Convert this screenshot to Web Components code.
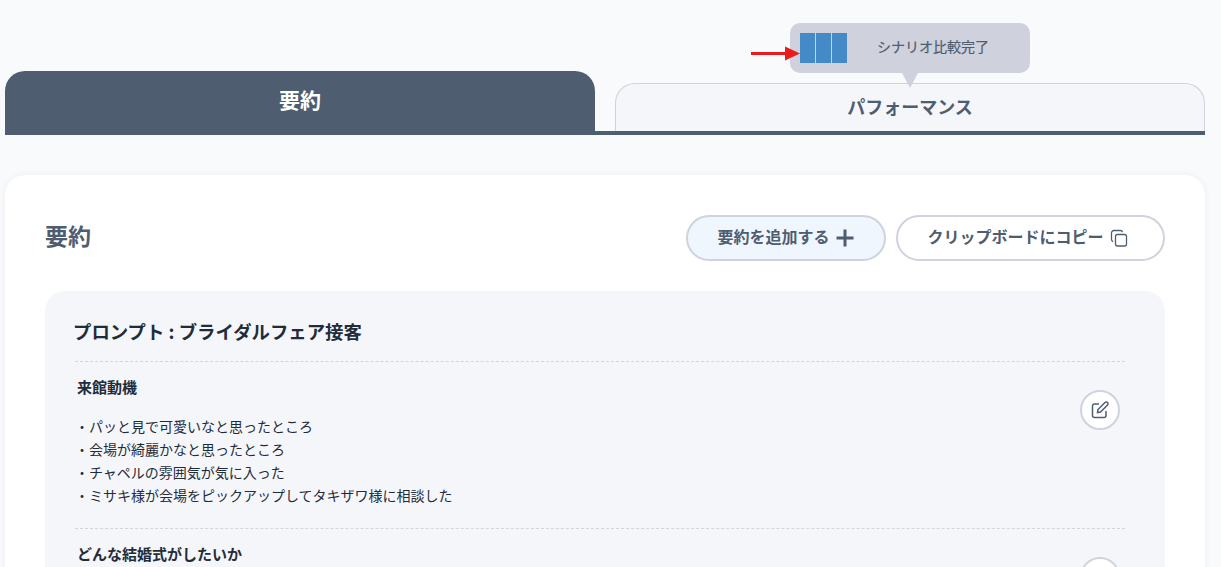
<!DOCTYPE html>
<html lang="ja">
<head>
<meta charset="utf-8">
<title>要約</title>
<style>
  html, body { margin: 0; height: 567px; overflow: hidden; background: #f9fafc; }
  body { font-family: "Noto Sans CJK JP", "Noto Sans", sans-serif; color: #1f2d3a; }
</style>
</head>
<body>
<app-page>
  <tab-bar></tab-bar>
  <summary-card>
    <prompt-panel heading="プロンプト : ブライダルフェア接客">
      <summary-row heading="来館動機">
        <p>・パッと見で可愛いなと思ったところ</p>
        <p>・会場が綺麗かなと思ったところ</p>
        <p>・チャペルの雰囲気が気に入った</p>
        <p>・ミサキ様が会場をピックアップしてタキザワ様に相談した</p>
      </summary-row>
      <summary-row heading="どんな結婚式がしたいか"></summary-row>
    </prompt-panel>
  </summary-card>
</app-page>

<script>
class AppPage extends HTMLElement {
  connectedCallback() {
    this.attachShadow({ mode: 'open' });
    this.shadowRoot.innerHTML = `
      <style>
        :host { display: flex; flex-direction: column; gap: 40px; padding: 0 16px 0 5px; }
      </style>
      <slot></slot>
    `;
  }
}
customElements.define('app-page', AppPage);

class TabBar extends HTMLElement {
  connectedCallback() {
    this.attachShadow({ mode: 'open' });
    this.shadowRoot.innerHTML = `
      <style>
        :host { display: block; position: relative; padding-top: 71px; }
        .tabs {
          display: grid; grid-template-columns: 590px 590px; column-gap: 20px;
          align-items: end; border-bottom: 4px solid #4f5d70;
        }
        .tab { display: flex; align-items: center; justify-content: center; font-weight: 700; box-sizing: border-box; }
        .active {
          height: 64px; margin-bottom: -4px; padding-bottom: 8px;
          background: #4f5d70; color: #fff; font-size: 21px; border-radius: 20px 20px 0 0;
        }
        .idle {
          height: 48px; padding-bottom: 4px; background: #f5f6fa; color: #4f5d70; font-size: 18px;
          border: 1px solid #cfd2dc; border-bottom: 0; border-radius: 20px 20px 0 0;
        }
        .tip {
          position: absolute; left: 785px; top: 23px; width: 240px; height: 50px;
          display: flex; align-items: center; padding-left: 10px; box-sizing: border-box;
          background: #cfd1dc; border-radius: 10px; color: #4f5d70; font-size: 14px;
        }
        .tip::after {
          content: ''; position: absolute; left: 112px; top: 50px;
          border-left: 8px solid transparent; border-right: 8px solid transparent;
          border-top: 15px solid #cfd1dc;
        }
        .bars { display: flex; gap: 1px; }
        .bars i { display: block; width: 15px; height: 30px; background: #448ac7; }
        .label { margin-left: 30px; padding-bottom: 4px; -webkit-text-stroke: 0.2px #4f5d70; }
        .arrow { position: absolute; left: 746px; top: 44px; }
      </style>
      <div class="tabs">
        <div class="tab active">要約</div>
        <div class="tab idle">パフォーマンス</div>
      </div>
      <div class="tip">
        <div class="bars"><i></i><i></i><i></i></div>
        <span class="label">シナリオ比較完了</span>
      </div>
      <svg class="arrow" width="50" height="20" viewBox="0 0 50 20">
        <path d="M0 9.500H36" stroke="#e81c1c" stroke-width="3" fill="none"/>
        <path d="M34 2.500L49 9.500L34 16.500Z" fill="#e81c1c"/>
      </svg>
    `;
  }
}
customElements.define('tab-bar', TabBar);

class PillButton extends HTMLElement {
  connectedCallback() {
    this.attachShadow({ mode: 'open' });
    this.shadowRoot.innerHTML = `
      <style>
        :host {
          display: flex; align-items: center; justify-content: center; gap: 6px;
          box-sizing: border-box; height: 46px; border: 2px solid #cfd3de; border-radius: 23px;
          background: #fff; color: #4f5d70; font-size: 16px; font-weight: 700;
        }
        :host([tint]) { background: #eff6fd; }
        .text { padding-bottom: 5px; }
      </style>
      <span class="text"><slot></slot></span><slot name="icon"></slot>
    `;
  }
}
customElements.define('pill-button', PillButton);

class SummaryCard extends HTMLElement {
  connectedCallback() {
    this.attachShadow({ mode: 'open' });
    this.shadowRoot.innerHTML = `
      <style>
        :host {
          display: block; width: 1200px; box-sizing: border-box; padding: 40px 40px 0;
          background: #fff; border-radius: 20px; box-shadow: 0 0 6px rgba(79, 93, 112, .08);
        }
        .head { display: flex; align-items: center; margin-bottom: 30px; }
        h2 { flex: 1; margin: 0; padding-bottom: 6px; font-size: 23px; font-weight: 700; color: #4f5d70; }
        .add { width: 200px; margin-right: 10px; padding-left: 1px; padding-right: 2px; }
        .copy { width: 269px; padding-right: 6px; }
        svg { display: block; }
      </style>
      <div class="head">
        <h2>要約</h2>
        <pill-button class="add" tint>要約を追加する
          <svg slot="icon" width="18" height="18" viewBox="0 0 18 18"><path d="M9 .5V17.500M.5 9H17.500" stroke="#4f5d70" stroke-width="3" fill="none"/></svg>
        </pill-button>
        <pill-button class="copy">クリップボードにコピー
          <svg slot="icon" width="18" height="18" viewBox="0 0 18 18" fill="none" stroke="#4f5d70" stroke-width="1.300"><rect x="5.500" y="5.500" width="11" height="11.500" rx="2"/><path d="M12.500 3.200A2.200 2.200 0 0 0 10.500 1.500H4A2.500 2.500 0 0 0 1.500 4V10.500A2.200 2.200 0 0 0 3.200 12.500"/></svg>
        </pill-button>
      </div>
      <slot></slot>
    `;
  }
}
customElements.define('summary-card', SummaryCard);

class PromptPanel extends HTMLElement {
  connectedCallback() {
    this.attachShadow({ mode: 'open' });
    this.shadowRoot.innerHTML = `
      <style>
        :host {
          display: block; box-sizing: border-box; padding: 24px 40px 20px 28px;
          background: #f5f6fa; border-radius: 20px;
        }
        h3 { margin: 0; height: 46px; line-height: 32px; font-size: 18.400px; font-weight: 700; color: #1f2d3a; }
      </style>
      <h3></h3>
      <slot></slot>
    `;
    this.shadowRoot.querySelector('h3').textContent = this.getAttribute('heading');
  }
}
customElements.define('prompt-panel', PromptPanel);

class SummaryRow extends HTMLElement {
  connectedCallback() {
    this.attachShadow({ mode: 'open' });
    this.shadowRoot.innerHTML = `
      <style>
        :host {
          display: flex; align-items: flex-start; margin-left: 2px;
          border-top: 1px dashed #d3d5de; padding: 15px 5px 21px 2px; font-size: 14px;
        }
        .text { flex: 1; }
        h4 { margin: 0 0 18px; line-height: 20px; font-size: 15px; font-weight: 700; }
        ::slotted(p) { margin: 0 0 0 -2px; line-height: 23px; }
        .edit {
          display: flex; align-items: center; justify-content: center;
          width: 40px; height: 40px; box-sizing: border-box; margin-top: 13px;
          border: 2px solid #cfd3de; border-radius: 50%; background: #fff;
        }
      </style>
      <div class="text"><h4></h4><slot></slot></div>
      <div class="edit">
        <svg width="18" height="18" viewBox="0 0 18 18" fill="none" stroke="#4f5d70" stroke-width="1.500">
          <path d="M8 3H3.500A2 2 0 0 0 1.500 5V14.500A2 2 0 0 0 3.500 16.500H13A2 2 0 0 0 15 14.500V10"/>
          <path d="M6.500 11.500L7 8.500L14 1.500A1.400 1.400 0 0 1 16.500 4L9.500 11Z"/>
        </svg>
      </div>
    `;
    this.shadowRoot.querySelector('h4').textContent = this.getAttribute('heading');
  }
}
customElements.define('summary-row', SummaryRow);
</script>
</body>
</html>
